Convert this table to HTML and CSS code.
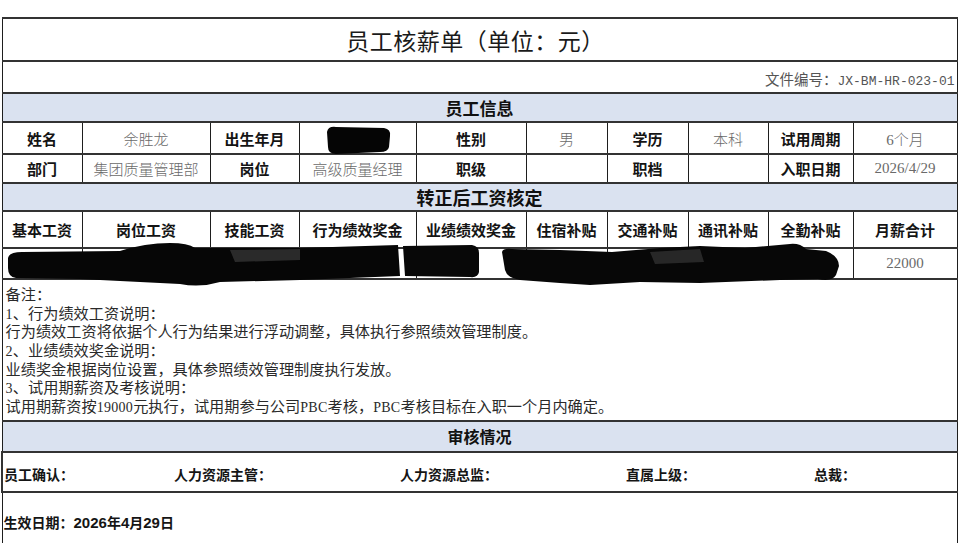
FILE: index.html
```html
<!DOCTYPE html>
<html lang="zh-CN">
<head>
<meta charset="utf-8">
<title>员工核薪单</title>
<link rel="stylesheet" href="styles.css">
</head>
<body>
<div class="sheet">
  <table class="form">
    <colgroup>
      <col class="c1"><col class="c2"><col class="c3"><col class="c4"><col class="c5">
      <col class="c6"><col class="c7"><col class="c8"><col class="c9"><col class="c10">
    </colgroup>
    <tr class="r-title"><td colspan="10" class="title">员工核薪单（单位：元）</td></tr>
    <tr class="r-file"><td colspan="10" class="fileno">文件编号：<span class="code">JX-BM-HR-023-01</span></td></tr>
    <tr class="r-sec"><td colspan="10" class="sec">员工信息</td></tr>
    <tr class="r-info">
      <td class="lbl">姓名</td><td class="val">余胜龙</td>
      <td class="lbl">出生年月</td><td class="val"></td>
      <td class="lbl">性别</td><td class="val">男</td>
      <td class="lbl">学历</td><td class="val">本科</td>
      <td class="lbl">试用周期</td><td class="val"><span class="num">6</span>个月</td>
    </tr>
    <tr class="r-info2">
      <td class="lbl">部门</td><td class="val">集团质量管理部</td>
      <td class="lbl">岗位</td><td class="val">高级质量经理</td>
      <td class="lbl">职级</td><td class="val"></td>
      <td class="lbl">职档</td><td class="val"></td>
      <td class="lbl">入职日期</td><td class="val num">2026/4/29</td>
    </tr>
    <tr class="r-sec2"><td colspan="10" class="sec sec-lg">转正后工资核定</td></tr>
    <tr class="r-head">
      <td class="lbl">基本工资</td><td class="lbl">岗位工资</td><td class="lbl">技能工资</td>
      <td class="lbl">行为绩效奖金</td><td class="lbl">业绩绩效奖金</td><td class="lbl">住宿补贴</td>
      <td class="lbl">交通补贴</td><td class="lbl">通讯补贴</td><td class="lbl">全勤补贴</td>
      <td class="lbl">月薪合计</td>
    </tr>
    <tr class="r-data">
      <td></td><td></td><td></td><td></td><td></td><td></td><td></td><td></td><td></td>
      <td class="val num">22000</td>
    </tr>
    <tr class="r-notes">
      <td colspan="10" class="notes">
        <p>备注：</p>
        <p><span class="n">1</span>、行为绩效工资说明：</p>
        <p>行为绩效工资将依据个人行为结果进行浮动调整，具体执行参照绩效管理制度。</p>
        <p><span class="n">2</span>、业绩绩效奖金说明：</p>
        <p>业绩奖金根据岗位设置，具体参照绩效管理制度执行发放。</p>
        <p><span class="n">3</span>、试用期薪资及考核说明：</p>
        <p>试用期薪资按<span class="n">19000</span>元执行，试用期参与公司<span class="n">PBC</span>考核，<span class="n">PBC</span>考核目标在入职一个月内确定。</p>
      </td>
    </tr>
    <tr class="r-sec3"><td colspan="10" class="sec sec-sm">审核情况</td></tr>
    <tr class="r-sign">
      <td colspan="10" class="sign">
        <div class="sign-grid">
          <span>员工确认：</span>
          <span>人力资源主管：</span>
          <span>人力资源总监：</span>
          <span>直属上级：</span>
          <span>总裁：</span>
        </div>
      </td>
    </tr>
    <tr class="r-date"><td colspan="10" class="date">生效日期：<span class="dnum">2026</span>年<span class="dnum">4</span>月<span class="dnum">29</span>日</td></tr>
  </table>

  <svg class="redact" width="963" height="543" viewBox="0 0 963 543" aria-hidden="true">
    <path d="M327,132 Q328,126 336,127 L384,128 Q391,129 390,136 L389,147 Q388,152 380,152 L336,154 Q328,154 328,147 Z" fill="#050505"/>
    <path d="M8,258 Q9,252 22,252 L120,251 Q145,243 170,243 Q188,243 195,248 L300,248 L398,245 L400,276 L300,280 L220,282 Q200,288 180,284 L80,279 L16,278 Q8,277 8,268 Z" fill="#060606"/>
    <path d="M230,250 L300,249 L300,260 L235,262 Z" fill="#3a3a3a" opacity="0.7"/>
    <path d="M403,246 L472,245 Q479,246 479,253 L479,272 Q478,278 470,277 L405,276 Z" fill="#080808"/>
    <path d="M502,252 Q503,248 512,249 L560,250 L612,252 L660,248 L700,246 L745,248 L790,244 Q800,243 806,249 L826,251 Q839,256 839,266 L836,275 Q832,282 818,279 L780,280 L700,283 L640,282 L590,285 L560,283 L520,280 Q507,278 505,270 Z" fill="#070707"/>
    <path d="M650,252 L700,249 L704,262 L655,264 Z" fill="#3d3d3d" opacity="0.6"/>
  </svg>
</div>
</body>
</html>
```

FILE: styles.css
```css
html, body {
  margin: 0;
  padding: 0;
  background: #ffffff;
}

body {
  font-family: "Liberation Serif", "Noto Sans CJK SC", serif;
  color: #222;
}

.sheet {
  position: relative;
  width: 963px;
  height: 543px;
  overflow: hidden;
  padding: 17px 0 0 1px;
  box-sizing: border-box;
}

.form {
  border-collapse: collapse;
  table-layout: fixed;
  width: 955px;
}

.c1 { width: 80px; }
.c2 { width: 128px; }
.c3 { width: 89px; }
.c4 { width: 117px; }
.c5 { width: 110px; }
.c6 { width: 81px; }
.c7 { width: 81px; }
.c8 { width: 80px; }
.c9 { width: 85px; }
.c10 { width: 104px; }

.form td {
  border-left: 1px solid #1e1e1e;
  border-right: 1px solid #1e1e1e;
  border-top: 2px solid #333;
  border-bottom: 2px solid #333;
  padding: 0;
  text-align: center;
  vertical-align: middle;
  white-space: nowrap;
  overflow: hidden;
}

.r-title td { height: 41px; }
.r-file td { height: 28px; }
.r-sec td { height: 27px; }
.r-info td { height: 30px; }
.r-info2 td { height: 27px; }
.r-sec2 td { height: 26px; }
.r-head td { height: 35px; }
.r-data td { height: 29px; }
.r-sec3 td { height: 29px; }
.r-sign td { height: 33px; }
.r-date td { height: 64px; }

.title {
  font-family: "Liberation Serif", "Noto Sans CJK SC", serif;
  font-size: 23px;
  font-weight: 400;
  color: #1a1a1a;
  letter-spacing: 0.5px;
  padding-right: 8px !important;
}

.fileno {
  text-align: right !important;
  font-size: 14.5px;
  color: #555;
  padding-right: 2px !important;
  padding-top: 2px !important;
}

.code {
  font-family: "Liberation Mono", monospace;
  font-size: 13px;
}

.sec {
  background: #dae2f0;
  font-family: "Noto Sans CJK SC", sans-serif;
  font-weight: 700;
  font-size: 17px;
  color: #111;
}

.sec-lg { font-size: 18px; }
.sec-sm { font-size: 16px; }

.lbl {
  font-family: "Noto Sans CJK SC", sans-serif;
  font-weight: 700;
  font-size: 15px;
  color: #141414;
}

.val {
  font-family: "Liberation Serif", "Noto Sans CJK SC", serif;
  font-weight: 300;
  font-size: 15px;
  color: #6a6a6a;
}

.num {
  font-family: "Liberation Serif", serif;
  font-size: 15px;
}

.notes {
  text-align: left !important;
  vertical-align: top !important;
  padding: 6px 4px 3px 3px !important;
  font-size: 15.2px;
  line-height: 18.7px;
  color: #2a2a2a;
}

.notes p {
  margin: 0;
  height: 18.7px;
}

.n {
  font-family: "Liberation Serif", serif;
  font-size: 14px;
  line-height: 1;
  letter-spacing: 0.3px;
}

.sign {
  border-left: 2px solid #333 !important;
  text-align: left !important;
  padding: 5px 0 0 1px !important;
}

.sign-grid {
  display: grid;
  grid-template-columns: 170px 226px 226px 188px 1fr;
  font-family: "Noto Sans CJK SC", sans-serif;
  font-weight: 700;
  font-size: 14px;
  color: #151515;
}

.date {
  text-align: left !important;
  vertical-align: top !important;
  padding: 19px 0 0 1px !important;
  font-family: "Noto Sans CJK SC", sans-serif;
  font-weight: 700;
  font-size: 14px;
  color: #151515;
}

.dnum {
  font-family: "Liberation Sans Narrow", "Liberation Sans", sans-serif;
  font-weight: 700;
  font-size: 15px;
}

.redact {
  position: absolute;
  left: 0;
  top: 0;
  pointer-events: none;
}
```
